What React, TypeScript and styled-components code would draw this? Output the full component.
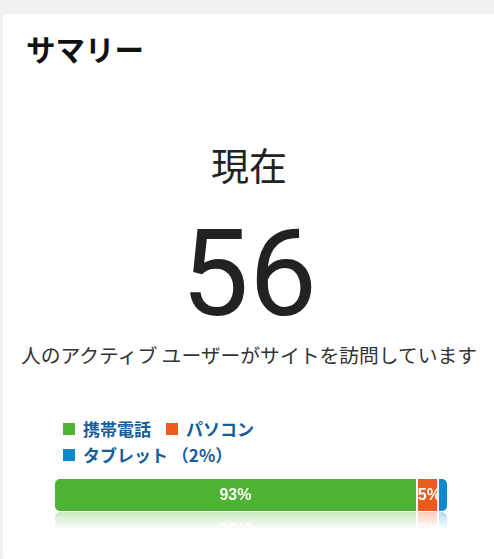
import React from "react";
import styled, { createGlobalStyle } from "styled-components";

const Global = createGlobalStyle`
  html, body { margin: 0; padding: 0; background: #f1f1f1; }
  body { font-family: "Noto Sans CJK JP", "Noto Sans", sans-serif; }
`;

const Page = styled.div`
  padding: 14px 0 0 3px;
  min-height: 559px;
  box-sizing: border-box;
  overflow: hidden;
`;

const Card = styled.section`
  background: #fff;
  width: 492px;
  min-height: 545px;
  border-radius: 2px;
  padding: 17px 0 0 23px;
  box-sizing: border-box;
`;

const Title = styled.h2`
  margin: 0;
  font-family: "Noto Sans CJK JP", sans-serif;
  font-weight: 700;
  font-size: 29.5px;
  line-height: 34px;
  color: #111;
`;

const Center = styled.div`
  margin-left: -23px;
  display: flex;
  flex-direction: column;
  align-items: center;
  color: #222;
`;

const Now = styled.div`
  margin-top: 77px;
  font-size: 38px;
  line-height: 44px;
  font-family: "Noto Sans CJK JP", sans-serif;
  font-weight: 400;
`;

const Count = styled.div`
  margin-top: 28px;
  font-family: Roboto, "Liberation Sans", sans-serif;
  font-size: 121px;
  line-height: 120px;
  font-weight: 400;
  color: #222;
`;

const Caption = styled.div`
  margin-top: 6px;
  font-size: 19.8px;
  line-height: 30px;
  color: #333;
  font-family: "Noto Sans CJK JP", sans-serif;
`;

const Chart = styled.div`
  margin: 47px 0 0 29px;
  width: 392px;
`;

const Legend = styled.ul`
  list-style: none;
  margin: 0 0 0 8px;
  padding: 0;
  display: flex;
  flex-wrap: wrap;
  width: 240px;
  column-gap: 15px;
  row-gap: 3px;
`;

const LegendItem = styled.li`
  display: flex;
  align-items: center;
  gap: 8px;
  font-size: 17px;
  line-height: 23px;
  font-weight: 700;
  color: #175d9a;
  font-family: "Noto Sans CJK JP", sans-serif;
`;

const Swatch = styled.span<{ $c: string }>`
  width: 12px;
  height: 12px;
  background: ${(p) => p.$c};
  flex: none;
`;

const Bar = styled.div`
  margin-top: 13px;
  display: flex;
  gap: 2px;
  height: 32px;
  border-radius: 5px;
  overflow: hidden;
  -webkit-box-reflect: below 1px linear-gradient(to bottom, transparent 45%, rgba(255, 255, 255, 0.3));
`;

const Segment = styled.div<{ $c: string }>`
  background: ${(p) => p.$c};
  display: flex;
  align-items: center;
  justify-content: safe center;
  color: #fff;
  font-family: "Liberation Sans", Arial, sans-serif;
  font-weight: 700;
  font-size: 16px;
  overflow: hidden;
  white-space: nowrap;
  min-width: 0;
`;

const data = [
  { label: "携帯電話", pct: 93, color: "#4eb232", show: true },
  { label: "パソコン", pct: 5, color: "#ec5a1c", show: true },
  { label: "タブレット （2%）", pct: 2, color: "#0a8ac9", show: false },
];

export default function App() {
  return (
    <>
      <Global />
      <Page>
        <Card>
          <Title>サマリー</Title>
          <Center>
            <Now>現在</Now>
            <Count>56</Count>
            <Caption>人のアクティブ ユーザーがサイトを訪問しています</Caption>
          </Center>
          <Chart>
            <Legend>
              {data.map((d) => (
                <LegendItem key={d.label}>
                  <Swatch $c={d.color} />
                  {d.label}
                </LegendItem>
              ))}
            </Legend>
            <Bar>
              {data.map((d) => (
                <Segment key={d.label} $c={d.color} style={{ flex: `${d.pct} 1 0` }}>
                  {d.show ? `${d.pct}%` : ""}
                </Segment>
              ))}
            </Bar>
          </Chart>
        </Card>
      </Page>
    </>
  );
}
